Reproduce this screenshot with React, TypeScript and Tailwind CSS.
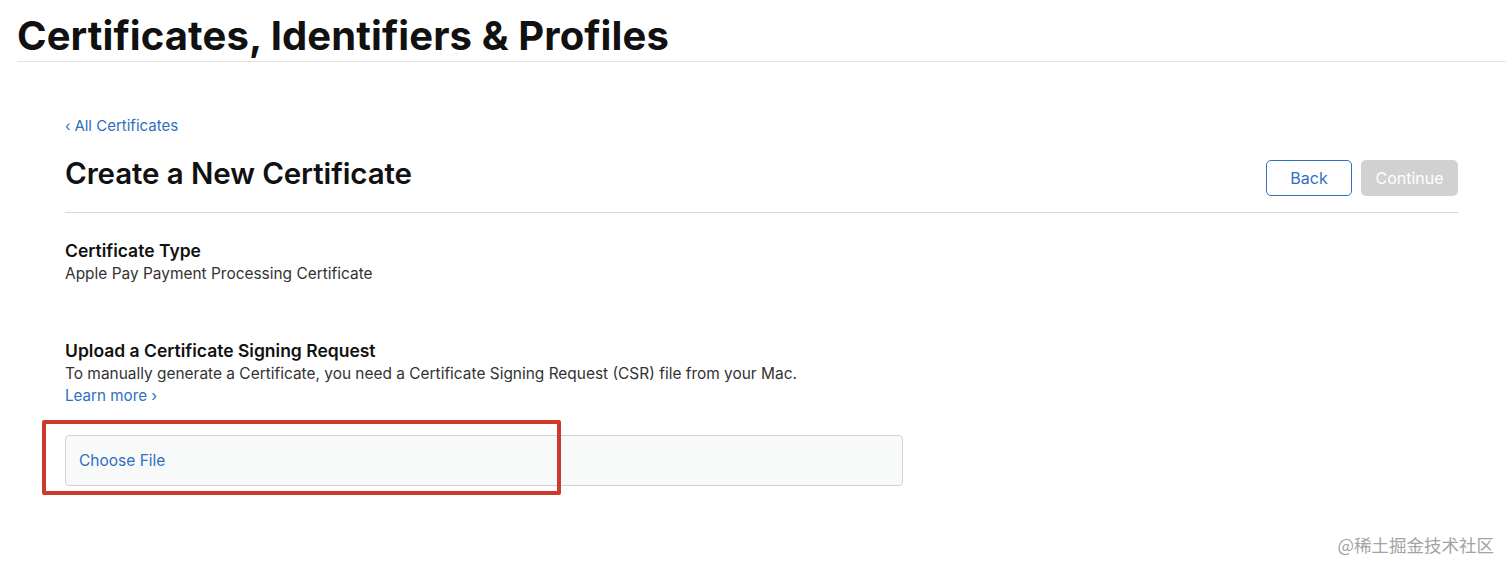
export default function App() {
  return (
    <div className="relative min-h-[573px] w-[1512px] bg-white font-['Inter',sans-serif] text-[#1d1d1f]">
      {/* page header */}
      <div className="pl-[17px] pr-[6px] pt-[12px]">
        <h1 className="text-[40px] font-bold leading-[48px] tracking-[0.1px] text-[#111]">
          Certificates, Identifiers &amp; Profiles
        </h1>
        <div className="mt-[1px] h-px bg-[#e3e3e3]" />
      </div>

      {/* content */}
      <div className="ml-[65px] w-[1393px] pt-[54px]">
        <a className="flex items-center gap-[4px] text-[15px] leading-[20px] text-[#2f6fc0]">
          <span className="text-[14px]">‹</span>
          <span>All Certificates</span>
        </a>

        <div className="mt-[12px] flex items-start justify-between pb-[16px] border-b border-[#d6d6d6]">
          <h2 className="mt-[8px] text-[29.5px] font-semibold leading-[34px] tracking-[-0.1px] text-[#111]">
            Create a New Certificate
          </h2>
          <div className="mt-[12px] flex gap-[9px]">
            <button className="h-[36px] w-[86px] rounded-[5px] border border-[#2f6fc0] text-[16px] text-[#2f6fc0]">
              Back
            </button>
            <button className="h-[36px] w-[97px] rounded-[5px] bg-[#d1d1d1] text-[16px] text-white">
              Continue
            </button>
          </div>
        </div>

        <div className="mt-[26px]">
          <h3 className="text-[17.5px] font-semibold leading-[24px] text-[#111]">Certificate Type</h3>
          <p className="text-[15.45px] leading-[22px] text-[#333]">Apple Pay Payment Processing Certificate</p>
        </div>

        <div className="mt-[54px]">
          <h3 className="text-[17.5px] font-semibold leading-[24px] text-[#111]">
            Upload a Certificate Signing Request
          </h3>
          <p className="text-[15.45px] leading-[22px] text-[#333]">
            To manually generate a Certificate, you need a Certificate Signing Request (CSR) file from your Mac.
          </p>
          <a className="block text-[15.2px] leading-[22px] text-[#2f6fc0]">Learn more ›</a>
        </div>

        <div className="relative mt-[28px] w-[838px]">
          <div className="flex h-[51px] items-center rounded-[4px] border border-[#d2d2d2] bg-[#f8f9f9] px-[13px]">
            <span className="text-[15.5px] text-[#2f6fc0]">Choose File</span>
          </div>
          {/* annotation highlight */}
          <div className="absolute left-[-23px] top-[-15px] h-[75px] w-[519px] rounded-[2px] border-[4px] border-[#cc3a2c]" />
        </div>
      </div>

      {/* watermark */}
      <div className="absolute right-[18px] top-[532px] font-['Noto_Sans_CJK_SC',sans-serif] text-[17.5px] text-[#a3a3a3]">
        @稀土掘金技术社区
      </div>
    </div>
  );
}
